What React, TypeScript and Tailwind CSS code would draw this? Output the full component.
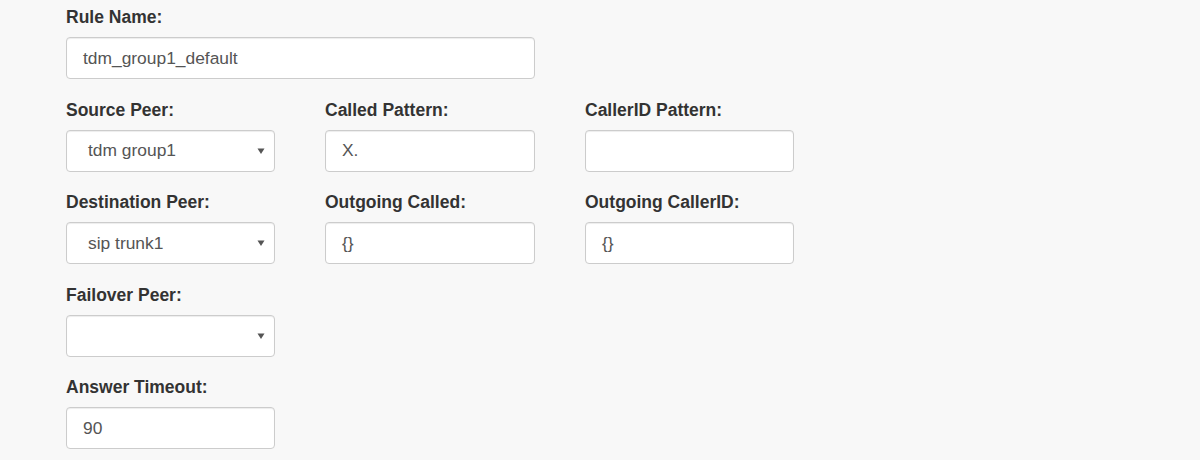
import React from "react";

const font = { fontFamily: '"Liberation Sans", Arial, sans-serif' };

function Label({ children }: { children: React.ReactNode }) {
  return (
    <label className="block text-[17.5px] leading-[24px] font-bold text-[#333] mb-[8px] whitespace-nowrap">
      {children}
    </label>
  );
}

function TextInput({ value }: { value: string }) {
  return (
    <div className="h-[42px] w-full bg-white border border-[#ccc] rounded-[4px] shadow-[inset_0_1px_1px_rgba(0,0,0,0.075)] flex items-center pl-[16px] text-[17.4px] text-[#555]">
      {value}
    </div>
  );
}

function Select({ value }: { value: string }) {
  return (
    <div className="h-[42px] w-full bg-white border border-[#ccc] rounded-[4px] shadow-[inset_0_1px_1px_rgba(0,0,0,0.075)] flex items-center justify-between pl-[21px] pr-[8px] text-[17.4px] text-[#555]">
      <span>{value}</span>
      <svg width="8" height="6" viewBox="0 0 8 6" className="mr-[1px]">
        <polygon points="0.5,0.5 7.5,0.5 4,6" fill="#555" />
      </svg>
    </div>
  );
}

function Field({ label, children }: { label: string; children: React.ReactNode }) {
  return (
    <div className="mb-[18.5px]">
      <Label>{label}</Label>
      {children}
    </div>
  );
}

export default function App() {
  return (
    <div className="w-[1200px] h-[460px] bg-[#f8f8f8] overflow-hidden" style={font}>
      <div className="pl-[66px] pt-[5px]">
        <div className="w-[469px]">
          <Field label="Rule Name:">
            <TextInput value="tdm_group1_default" />
          </Field>
        </div>
        <div className="grid grid-cols-[209px_210px_209px] gap-x-[50px]">
          <Field label="Source Peer:">
            <Select value="tdm group1" />
          </Field>
          <Field label="Called Pattern:">
            <TextInput value="X." />
          </Field>
          <Field label="CallerID Pattern:">
            <TextInput value="" />
          </Field>
          <Field label="Destination Peer:">
            <Select value="sip trunk1" />
          </Field>
          <Field label="Outgoing Called:">
            <TextInput value="{}" />
          </Field>
          <Field label="Outgoing CallerID:">
            <TextInput value="{}" />
          </Field>
        </div>
        <div className="w-[209px]">
          <Field label="Failover Peer:">
            <Select value="" />
          </Field>
          <Field label="Answer Timeout:">
            <TextInput value="90" />
          </Field>
        </div>
      </div>
    </div>
  );
}
